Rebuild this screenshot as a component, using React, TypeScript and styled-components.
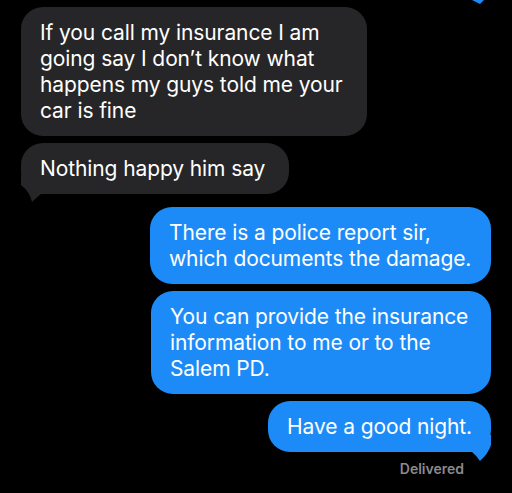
import styled, { createGlobalStyle } from "styled-components";

const GRAY = "#262628";
const BLUE = "#1d8bf7";

const GlobalStyle = createGlobalStyle`
  html, body {
    margin: 0;
    padding: 0;
    background: #000;
  }
  body {
    font-family: Inter, "Noto Sans", "Liberation Sans", sans-serif;
    -webkit-font-smoothing: antialiased;
  }
`;

type Side = "in" | "out";

interface Msg {
  side: Side;
  text: string;
  width: number;
  tail?: boolean;
}

const messages: Msg[] = [
  {
    side: "in",
    width: 346,
    text: "If you call my insurance I am\ngoing say I don\u2019t know what\nhappens my guys told me your\ncar is fine",
  },
  { side: "in", width: 268, text: "Nothing happy him say", tail: true },
  {
    side: "out",
    width: 341,
    text: "There is a police report sir,\nwhich documents the damage.",
  },
  {
    side: "out",
    width: 340,
    text: "You can provide the insurance\ninformation to me or to the\nSalem PD.",
  },
  { side: "out", width: 223, text: "Have a good night.", tail: true },
];

const Tail: React.FC<{ side: Side }> = ({ side }) =>
  side === "out" ? (
    <TailSvg $side={side} width="25" height="27" viewBox="0 0 25 27">
      <path
        d="M0 0 L25 0 L25 10 Q22 19 14 26 Q11 21 6 17 L0 17 Z"
        fill={BLUE}
      />
    </TailSvg>
  ) : (
    <TailSvg $side={side} width="25" height="27" viewBox="0 0 25 27">
      <path
        d="M0 0 L25 0 L25 19 L20 19 Q15 23 11 27 Q9 17 0 10 Z"
        fill={GRAY}
      />
    </TailSvg>
  );

const App: React.FC = () => {
  return (
    <>
      <GlobalStyle />
      <Screen>
        {/* tail of the previous bubble, cut off by the top edge */}
        <PrevTail width="12" height="4" viewBox="0 0 12 4">
          <path d="M0 0 L12 0 Q10 2 8 4 Q4 2 0 0 Z" fill={BLUE} />
        </PrevTail>
        <Thread>
          {messages.map((m, i) => (
            <Bubble
              key={i}
              $side={m.side}
              $w={m.width}
              $gapTop={i === 2 ? 13 : 7}
            >
              {m.text}
              {m.tail && <Tail side={m.side} />}
            </Bubble>
          ))}
          <Status>Delivered</Status>
        </Thread>
      </Screen>
    </>
  );
};

export default App;

const Screen = styled.div`
  position: relative;
  width: 512px;
  height: 493px;
  background: #000;
  overflow: hidden;
`;

const Thread = styled.div`
  display: flex;
  flex-direction: column;
  padding: 0 21px;
`;

const Bubble = styled.div<{ $side: Side; $w: number; $gapTop: number }>`
  position: relative;
  box-sizing: border-box;
  width: ${p => p.$w}px;
  margin-top: ${p => p.$gapTop}px;
  align-self: ${p => (p.$side === "in" ? "flex-start" : "flex-end")};
  padding: 12.5px 10px 12.5px 19px;
  border-radius: 22px;
  background: ${p => (p.$side === "in" ? GRAY : BLUE)};
  color: #fff;
  font-size: 21px;
  line-height: 26px;
  letter-spacing: -0.1px;
  white-space: pre-line;
`;

const TailSvg = styled.svg<{ $side: Side }>`
  position: absolute;
  bottom: ${p => (p.$side === "out" ? -10 : -8)}px;
  ${p => (p.$side === "out" ? "right: 0;" : "left: 0;")}
  display: block;
`;

const PrevTail = styled.svg`
  position: absolute;
  top: 0;
  left: 472px;
  display: block;
`;

const Status = styled.div`
  align-self: flex-end;
  margin: 9px 27px 0 0;
  color: #8a8a8e;
  font-size: 14px;
  font-weight: 600;
  line-height: 16px;
`;
